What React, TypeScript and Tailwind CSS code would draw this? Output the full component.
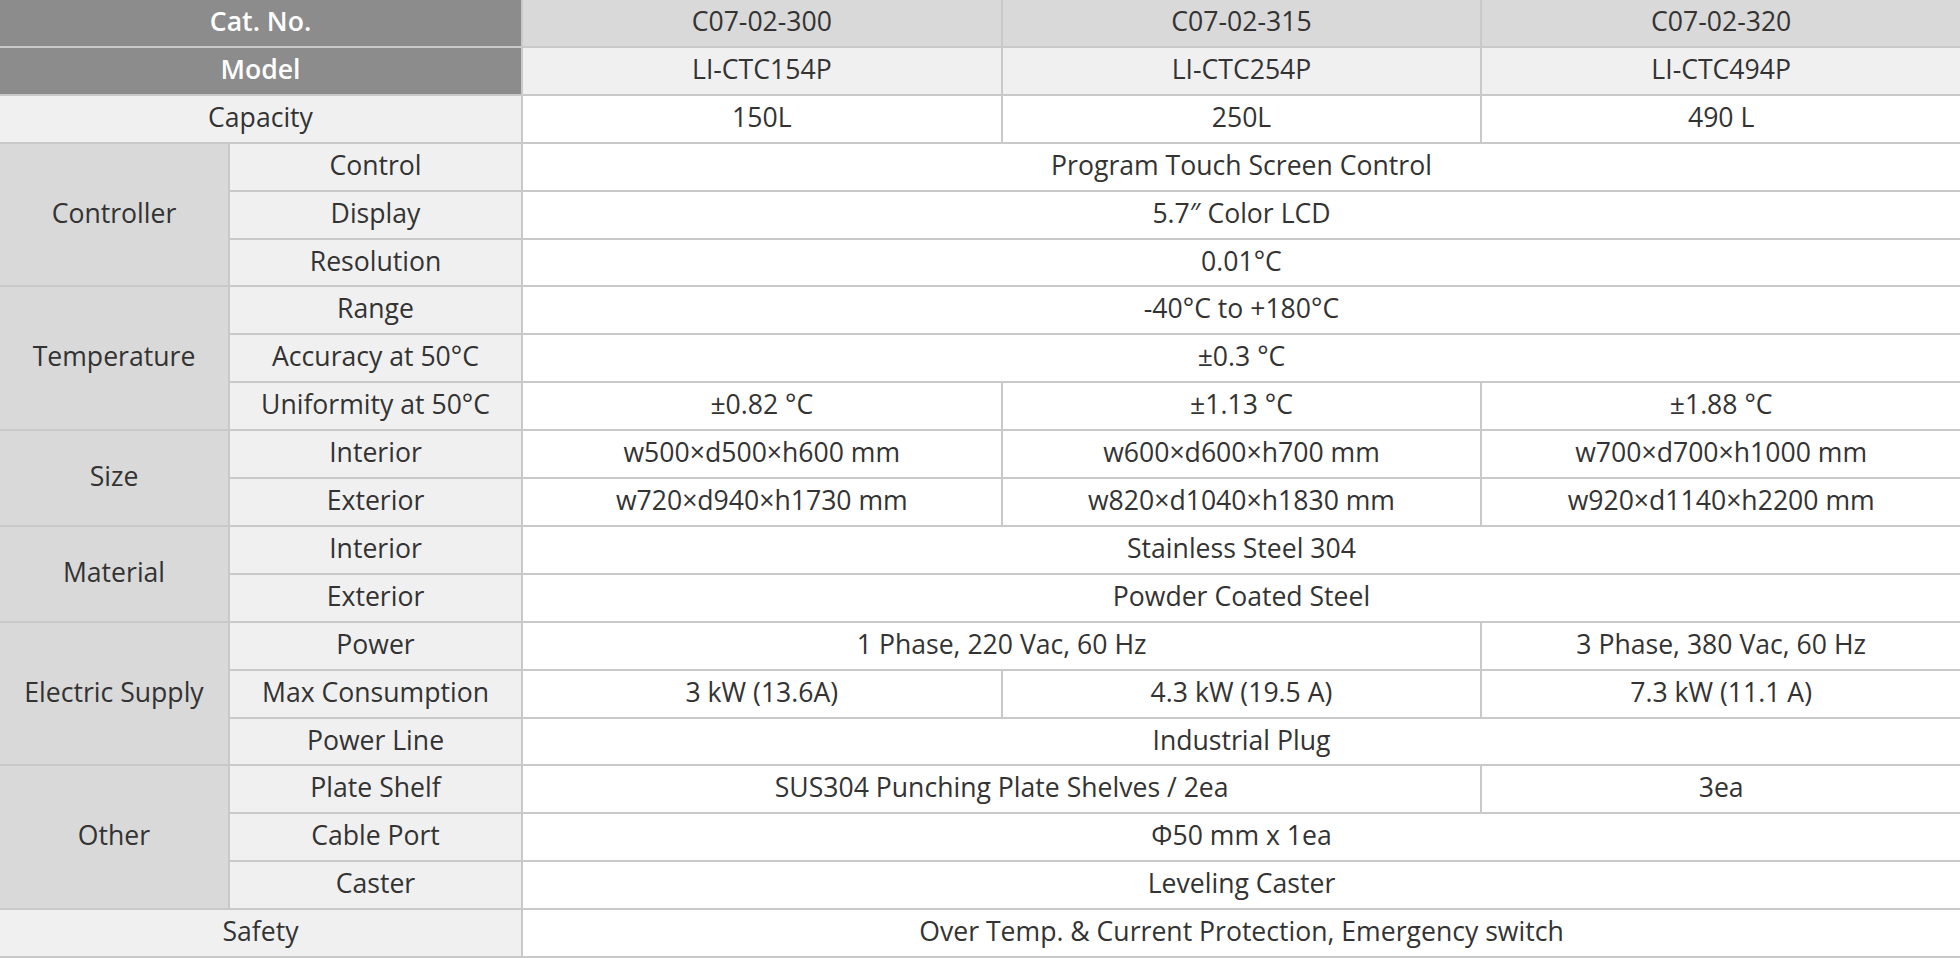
import type { ReactNode } from "react"

type CellProps = {
  children?: ReactNode
  className?: string
}

function Cell({ children, className = "" }: CellProps) {
  return (
    <div className={`flex items-center justify-center pb-[2px] text-center whitespace-nowrap ${className}`}>
      {children}
    </div>
  )
}

const head = "col-span-2 bg-[#8c8c8c] font-semibold text-white"
const label = "bg-[#f0f0f0]"
const group = "row-span-3 bg-[#d9d9d9]"
const val = "bg-white"

export default function App() {
  return (
    <div
      className="grid h-[958px] w-[1960px] grid-cols-[228px_291px_1fr_1fr_1fr] grid-rows-[repeat(20,minmax(0,1fr))] gap-[2px] bg-[#c9c9c9] pb-[2px] text-[26.6px] text-[#333333]"
      style={{ fontFamily: '"Open Sans", "Noto Sans", sans-serif' }}
    >
      <Cell className={head}>Cat. No.</Cell>
      <Cell className="bg-[#d9d9d9]">C07-02-300</Cell>
      <Cell className="bg-[#d9d9d9]">C07-02-315</Cell>
      <Cell className="bg-[#d9d9d9]">C07-02-320</Cell>

      <Cell className={head}>Model</Cell>
      <Cell className="bg-[#f0f0f0]">LI-CTC154P</Cell>
      <Cell className="bg-[#f0f0f0]">LI-CTC254P</Cell>
      <Cell className="bg-[#f0f0f0]">LI-CTC494P</Cell>

      <Cell className={`col-span-2 ${label}`}>Capacity</Cell>
      <Cell className={val}>150L</Cell>
      <Cell className={val}>250L</Cell>
      <Cell className={val}>490 L</Cell>

      {/* controller */}
      <Cell className={group}>Controller</Cell>
      <Cell className={label}>Control</Cell>
      <Cell className={`col-span-3 ${val}`}>Program Touch Screen Control</Cell>
      <Cell className={label}>Display</Cell>
      <Cell className={`col-span-3 ${val}`}>5.7″ Color LCD</Cell>
      <Cell className={label}>Resolution</Cell>
      <Cell className={`col-span-3 ${val}`}>0.01°C</Cell>

      {/* temperature */}
      <Cell className={group}>Temperature</Cell>
      <Cell className={label}>Range</Cell>
      <Cell className={`col-span-3 ${val}`}>-40°C to +180°C</Cell>
      <Cell className={label}>Accuracy at 50°C</Cell>
      <Cell className={`col-span-3 ${val}`}>±0.3 °C</Cell>
      <Cell className={label}>Uniformity at 50°C</Cell>
      <Cell className={val}>±0.82 °C</Cell>
      <Cell className={val}>±1.13 °C</Cell>
      <Cell className={val}>±1.88 °C</Cell>

      {/* size */}
      <Cell className="row-span-2 bg-[#d9d9d9]">Size</Cell>
      <Cell className={label}>Interior</Cell>
      <Cell className={val}>w500×d500×h600 mm</Cell>
      <Cell className={val}>w600×d600×h700 mm</Cell>
      <Cell className={val}>w700×d700×h1000 mm</Cell>
      <Cell className={label}>Exterior</Cell>
      <Cell className={val}>w720×d940×h1730 mm</Cell>
      <Cell className={val}>w820×d1040×h1830 mm</Cell>
      <Cell className={val}>w920×d1140×h2200 mm</Cell>

      {/* material */}
      <Cell className="row-span-2 bg-[#d9d9d9]">Material</Cell>
      <Cell className={label}>Interior</Cell>
      <Cell className={`col-span-3 ${val}`}>Stainless Steel 304</Cell>
      <Cell className={label}>Exterior</Cell>
      <Cell className={`col-span-3 ${val}`}>Powder Coated Steel</Cell>

      {/* electric */}
      <Cell className={group}>Electric Supply</Cell>
      <Cell className={label}>Power</Cell>
      <Cell className={`col-span-2 ${val}`}>1 Phase, 220 Vac, 60 Hz</Cell>
      <Cell className={val}>3 Phase, 380 Vac, 60 Hz</Cell>
      <Cell className={label}>Max Consumption</Cell>
      <Cell className={val}>3 kW (13.6A)</Cell>
      <Cell className={val}>4.3 kW (19.5 A)</Cell>
      <Cell className={val}>7.3 kW (11.1 A)</Cell>
      <Cell className={label}>Power Line</Cell>
      <Cell className={`col-span-3 ${val}`}>Industrial Plug</Cell>

      {/* other */}
      <Cell className={group}>Other</Cell>
      <Cell className={label}>Plate Shelf</Cell>
      <Cell className={`col-span-2 ${val}`}>SUS304 Punching Plate Shelves / 2ea</Cell>
      <Cell className={val}>3ea</Cell>
      <Cell className={label}>Cable Port</Cell>
      <Cell className={`col-span-3 ${val}`}>Φ50 mm x 1ea</Cell>
      <Cell className={label}>Caster</Cell>
      <Cell className={`col-span-3 ${val}`}>Leveling Caster</Cell>

      <Cell className={`col-span-2 ${label}`}>Safety</Cell>
      <Cell className={`col-span-3 ${val}`}>Over Temp. &amp; Current Protection, Emergency switch</Cell>
    </div>
  )
}
